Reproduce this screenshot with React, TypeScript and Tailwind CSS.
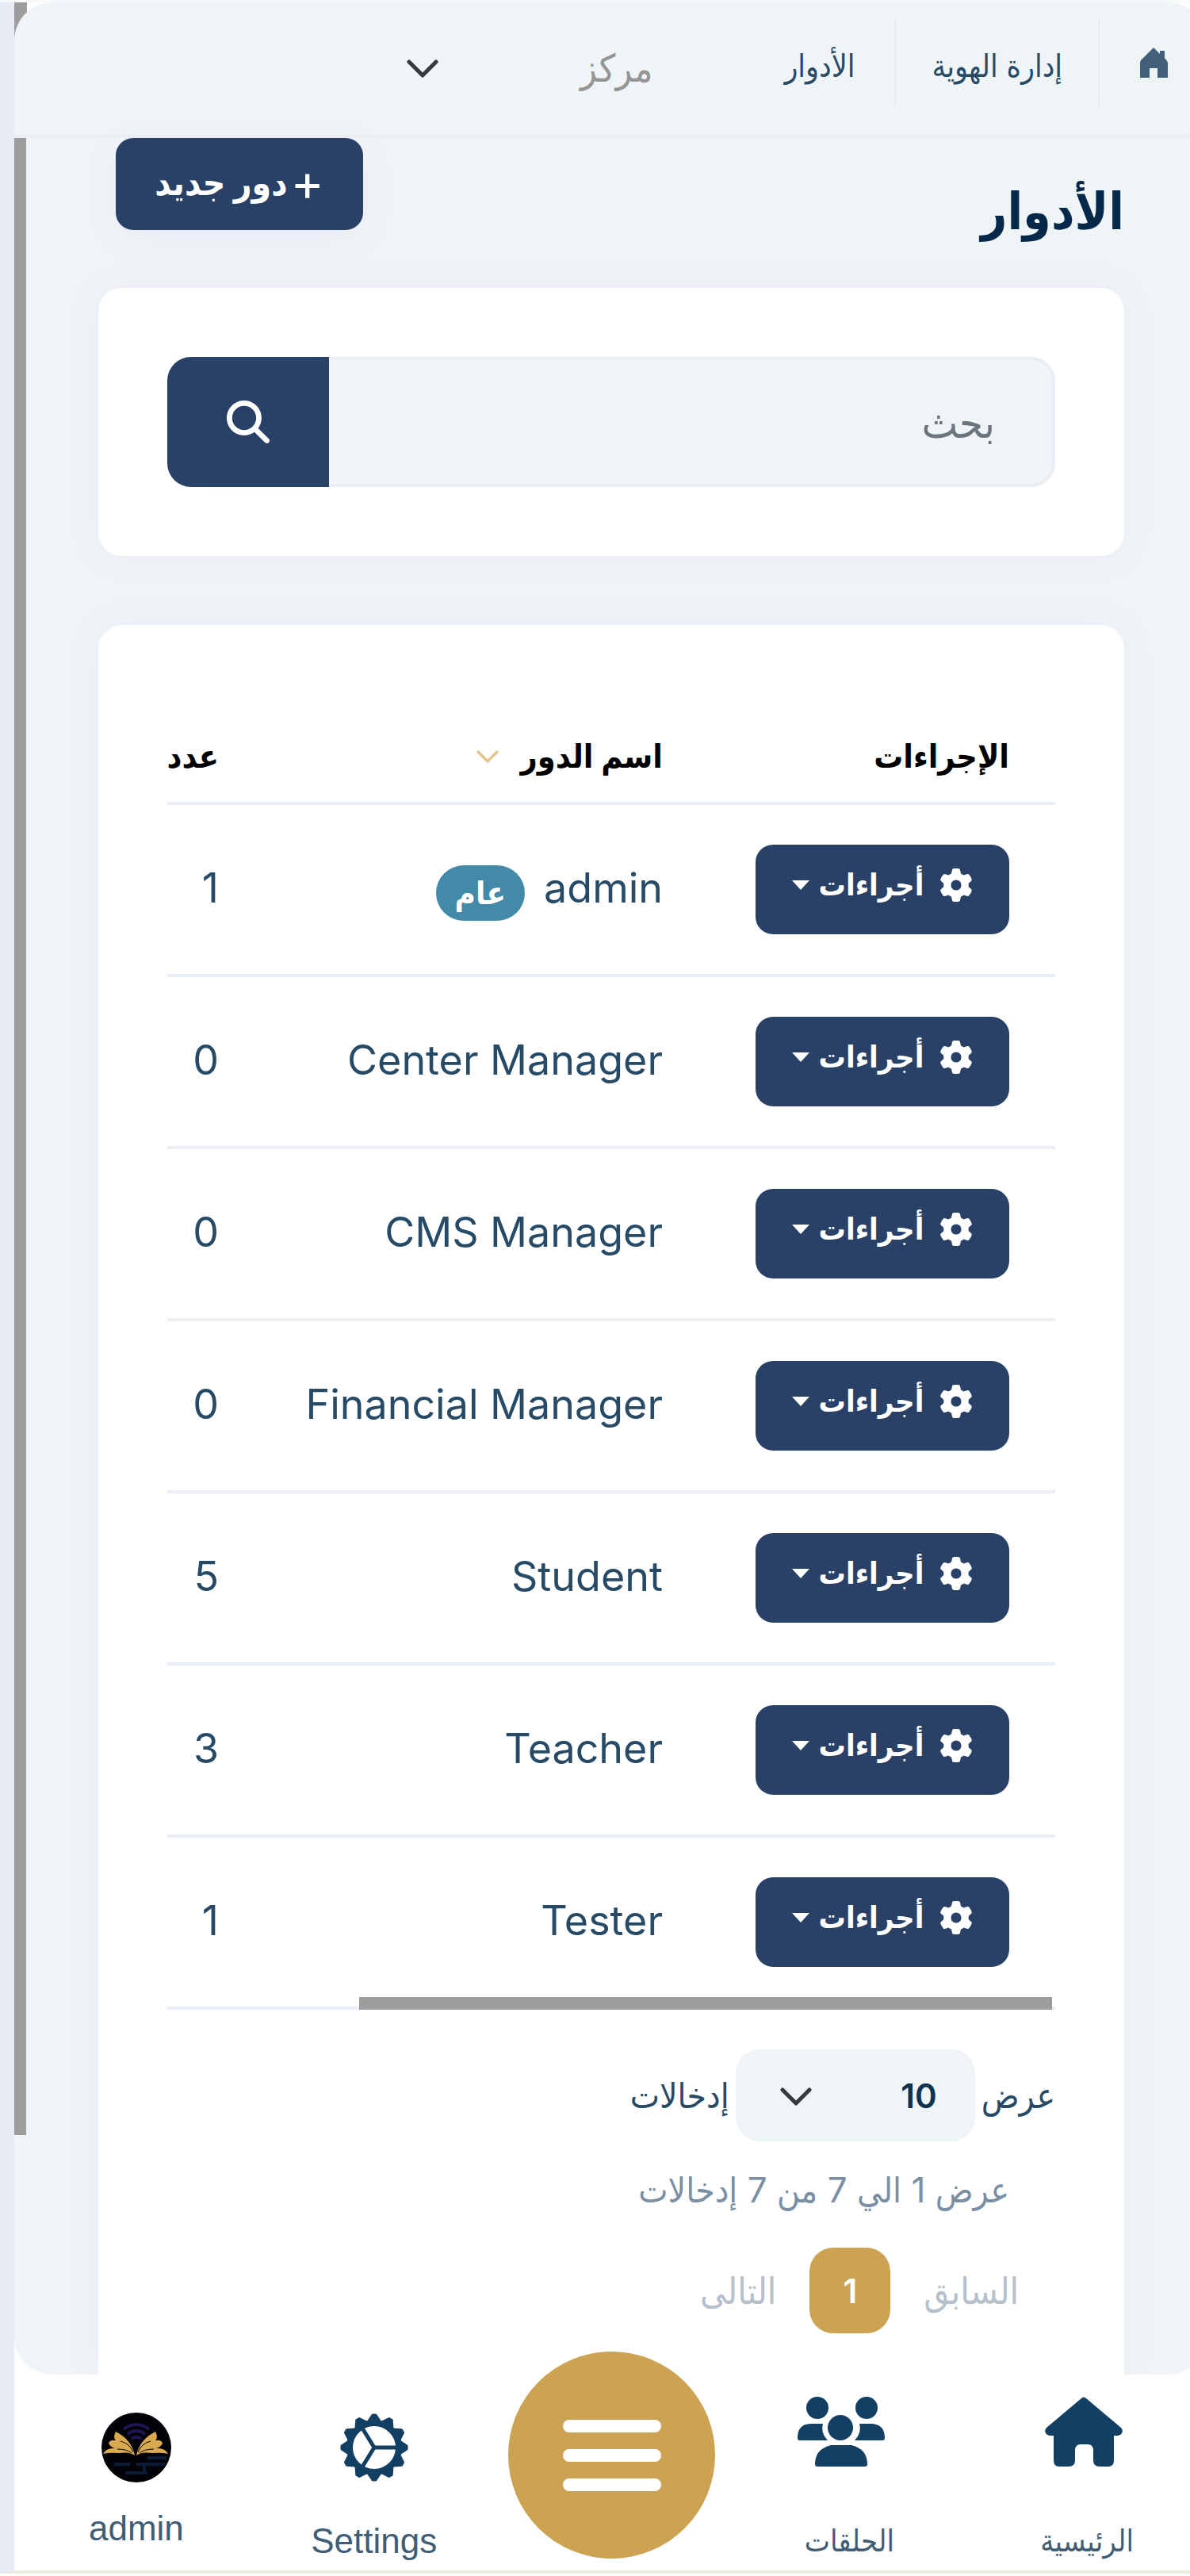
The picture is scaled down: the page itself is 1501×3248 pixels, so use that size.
import { FaGear, FaMagnifyingGlass } from "react-icons/fa6";

const roles = [
  { name: "admin", users: 1, global: true },
  { name: "Center Manager", users: 0 },
  { name: "CMS Manager", users: 0 },
  { name: "Financial Manager", users: 0 },
  { name: "Student", users: 5 },
  { name: "Teacher", users: 3 },
  { name: "Tester", users: 1 },
];

function Chevron({ className }: { className: string }) {
  return (
    <svg viewBox="0 0 40 24" className={className} fill="none" stroke="currentColor" aria-hidden="true">
      <path d="M3 3l17 17L37 3" strokeWidth="5" strokeLinecap="round" strokeLinejoin="round" />
    </svg>
  );
}

function Caret() {
  return (
    <svg viewBox="0 0 22 12" className="w-[22px]" fill="currentColor" aria-hidden="true">
      <path d="M0 0h22L11 12z" />
    </svg>
  );
}

function CrumbHome() {
  return (
    <svg viewBox="0 0 36 38" className="w-9" fill="currentColor" aria-hidden="true">
      <path d="M18 0l8 8V4h6v9l3 4q1 1 1 3v18H23V26H13v12H1V20q0-3 1-4z" />
    </svg>
  );
}

function HouseIcon() {
  return (
    <svg viewBox="0 0 98 88" className="h-[88px]" fill="currentColor" aria-hidden="true">
      <path d="M46 2q3-3 6 0l44 37q3 3 1 7-2 3-5 3h-5v31q0 8-7 8H69q-8 0-8-8V68q0-8-7-8H45q-7 0-7 8v12q0 8-8 8H18q-7 0-7-8V49H6q-3 0-5-3-2-4 1-7z" />
    </svg>
  );
}

function GroupsIcon() {
  return (
    <svg viewBox="0 0 110 88" className="h-[88px]" fill="currentColor" aria-hidden="true">
      <circle cx="25" cy="14" r="14" />
      <circle cx="87" cy="14" r="14" />
      <circle cx="54" cy="39" r="16" />
      <path d="M18 34h14q-3 12 6 21H3q-3 0-3-3 0-18 18-18zM92 34H78q3 12-6 21h35q3 0 3-3 0-18-18-18z" />
      <path d="M42 61h26q20 5 20 24 0 3-3 3H25q-3 0-3-3 0-19 20-24z" />
    </svg>
  );
}

function CogIcon() {
  const teeth = Array.from({ length: 12 }, (_, i) => i * 30);
  return (
    <svg viewBox="-44 -44 88 88" className="size-[88px]" fill="currentColor" stroke="currentColor" aria-hidden="true">
      <circle r="31" fill="none" strokeWidth="8" />
      {teeth.map((a) => (
        <path key={a} d="M32-8L41-2v4L32 8z" strokeWidth="3" strokeLinejoin="round" transform={`rotate(${a})`} />
      ))}
      <path d="M0 0H30M0 0L-16-26M0 0L-16 26" fill="none" strokeWidth="5" />
    </svg>
  );
}

function Avatar() {
  return (
    <svg viewBox="0 0 88 88" className="size-[88px]" aria-hidden="true">
      <circle cx="44" cy="44" r="44" fill="#020306" />
      <path d="M28 21q16-12 32 0M33 27q11-8 22 0M38 33q6-4 12 0" fill="none" stroke="#1d1650" strokeWidth="4" />
      <g fill="#d9a94f">
        <path d="M42 54Q38 34 18 24q-4 7 0 11-8-1-9 4 3 5 8 6-11-1-15 7 8-2 20-1 14-2 20 3z" />
        <path d="M44 54Q48 34 68 24q4 7 0 11 8-1 9 4-3 5-8 6 11-1 15 7-8-2-20-1-14-2-20 3z" />
      </g>
      <path d="M24 36q12 3 16 14M62 36q-12 3-16 14M20 46q12 0 18 5M66 46q-12 0-18 5" fill="none" stroke="#020306" strokeWidth="1" />
      <path d="M16 65h20M44 65h36M58 57h24M30 76h28M54 66v10" stroke="#0b1b35" strokeWidth="4" />
    </svg>
  );
}

export default function App() {
  return (
    <div dir="rtl" className="overflow-hidden border-t-3 border-[#f9f9f9] bg-white font-['Inter','DejaVu_Sans_Condensed','DejaVu_Sans',sans-serif] text-[#274a66]">
      <div className="relative border-b-4 border-l-[18px] border-b-[#edeae0] border-l-[#e7ebf5]">
        {/* page scroll thumb, runs behind the header */}
        <div className="absolute left-0 top-0 h-20 w-4 bg-[#9d9d9d]" />
        <div className="relative -mr-5 rounded-[48px] bg-[#eff4f7]">
          <div className="absolute left-0 top-[171px] h-[2518px] w-[15px] bg-[#9d9d9d]" />
          <header className="flex h-[171px] items-center rounded-t-[48px] border-b-4 border-[#e9eef4] pb-4 pr-12 font-['Liberation_Sans','DejaVu_Sans_Condensed','DejaVu_Sans',sans-serif]">
            <a href="#" aria-label="الرئيسية" className="pl-[50px] text-[#42607a]"><CrumbHome /></a>
            <a href="#" className="flex h-[110px] items-center border-x-2 border-[#e6eaf3] px-[45px] pt-3 text-[39px]">إدارة الهوية</a>
            <a href="#" className="px-[50px] pt-3 text-[39px]">الأدوار</a>
            <div className="relative mr-[100px] mt-4 w-[350px]">
              <select aria-label="مركز" className="w-full appearance-none bg-transparent pr-4 text-[48px] text-[#959595]">
                <option>مركز</option>
              </select>
              <Chevron className="pointer-events-none absolute left-6 top-1/2 w-10 -translate-y-1/2 text-[#343a40]" />
            </div>
          </header>

          <main className="pl-[106px] pr-[103px]">
            <div className="flex h-[189px] items-start justify-between pl-[22px]">
              <h1 className="pt-11 text-[64px] font-semibold text-[#06294a]">الأدوار</h1>
              <button className="flex h-[116px] w-[312px] items-center justify-center gap-1 rounded-[22px] bg-[#294166] pb-1 text-[44px] font-bold text-white shadow-[0_10px_40px_#e9edf6]">
                <span className="text-[64px] font-normal">+</span>دور جديد
              </button>
            </div>

            <section className="rounded-[30px] bg-white p-[87px] shadow-[0_0_40px_#e9edf6]">
              <form className="flex h-[164px]">
                <input aria-label="بحث" placeholder="بحث" className="min-w-0 flex-1 rounded-r-[30px] border-4 border-l-0 border-[#e9eef4] bg-[#eff4f7] pr-[72px] text-[54px] placeholder:text-[#6c757d]" />
                <button type="button" aria-label="بحث" className="flex w-[204px] items-center justify-center rounded-l-[30px] bg-[#294166] text-white">
                  <FaMagnifyingGlass size={54} />
                </button>
              </form>
            </section>

            <section className="mt-[87px] h-[2206px] rounded-t-[30px] bg-white px-[87px] pt-[109px] shadow-[0_0_40px_#e9edf6]">
              <div className="relative overflow-hidden">
                <table className="w-[1437px] table-fixed border-collapse text-right">
                  <thead>
                    <tr className="h-[116px] border-b-4 border-[#e9eef4] text-[41px] text-black">
                      <th className="w-[437px] pr-[58px] font-bold">الإجراءات</th>
                      <th className="w-[560px] pr-[58px] font-bold">
                        <span className="flex items-center gap-7">اسم الدور<Chevron className="w-7 text-[#e2c58c]" /></span>
                      </th>
                      <th className="pr-[58px] font-bold">عدد</th>
                    </tr>
                  </thead>
                  <tbody>
                    {roles.map((role) => (
                      <tr key={role.name} className="h-[217px] border-b-4 border-[#e9eef4] text-[52px]">
                        <td className="pr-[58px]">
                          <button className="flex h-[113px] w-[320px] items-center justify-center gap-3 rounded-[22px] bg-[#294166] pb-3 text-[38px] font-bold text-white">
                            <FaGear size={42} className="ml-2" />أجراءات<Caret />
                          </button>
                        </td>
                        <td className="pb-1 pr-[58px]">
                          <span className="flex items-center gap-6">
                            <bdi>{role.name}</bdi>
                            {role.global && <span className="mt-3 flex h-[70px] items-center rounded-full bg-[#4389a8] px-6 text-[40px] font-bold text-white">عام</span>}
                          </span>
                        </td>
                        <td className="pb-1 pr-[58px]">{role.users}</td>
                      </tr>
                    ))}
                  </tbody>
                </table>
                <div className="absolute bottom-0 right-1 h-4 w-[78%] bg-[#9d9d9d]" />
              </div>

              <label className="mt-[50px] flex items-center gap-2 text-[44px]">
                عرض
                <span className="relative">
                  <select className="h-[116px] w-[302px] appearance-none rounded-[30px] bg-[#eff4f7] pr-12 text-[42px] font-semibold text-[#0e3350]">
                    <option>10</option>
                  </select>
                  <Chevron className="pointer-events-none absolute left-14 top-12 w-10 text-[#343a40]" />
                </span>
                إدخالات
              </label>
              <p className="mt-7 pr-[58px] text-[44px] text-[#7a8fa3]">عرض 1 الي 7 من 7 إدخالات</p>
              <nav className="mt-10 flex items-center gap-[42px] pr-[46px] text-[46px] text-[#b5c0cb]">
                <button>السابق</button>
                <button className="h-[108px] w-[102px] rounded-[30px] bg-[#cba352] text-[42px] font-semibold text-white">1</button>
                <button>التالى</button>
              </nav>
            </section>
          </main>
        </div>

        <nav className="relative -mr-5 grid h-[247px] grid-cols-5 items-start bg-white pl-1 text-center font-['Liberation_Sans','DejaVu_Sans_Condensed','DejaVu_Sans',sans-serif] text-[44px] leading-[52px] text-[#3f5d75]">
          <a href="#" className="flex flex-col items-center gap-[68px] pt-7 text-[38px]"><span className="pl-0 pr-2 text-[#133f63]"><HouseIcon /></span>الرئيسية</a>
          <a href="#" className="flex flex-col items-center gap-[68px] pt-7 text-[38px]"><span className="pr-5 text-[#133f63]"><GroupsIcon /></span>الحلقات</a>
          <button aria-label="القائمة" className="mx-auto -mt-[29px] flex size-[261px] flex-col items-center justify-center gap-[21px] rounded-full bg-[#cba352]">
            <span className="h-4 w-[124px] rounded-full bg-white" />
            <span className="h-4 w-[124px] rounded-full bg-white" />
            <span className="h-4 w-[124px] rounded-full bg-white" />
          </button>
          <a href="#" className="flex flex-col items-center gap-12 pt-12"><span className="text-[#133f63]"><CogIcon /></span>Settings</a>
          <a href="#" className="flex flex-col items-center gap-8 pt-12"><Avatar />admin</a>
        </nav>
      </div>
    </div>
  );
}
